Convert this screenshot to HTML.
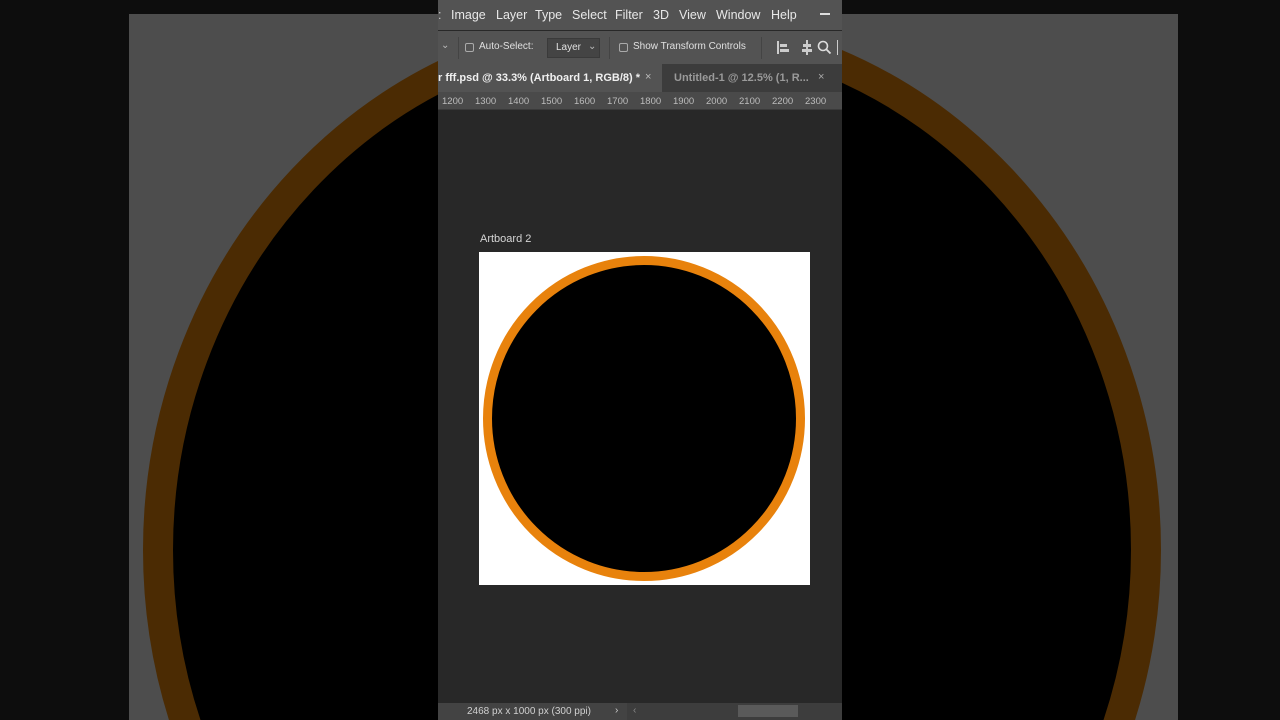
<!DOCTYPE html>
<html><head><meta charset="utf-8"><style>
*{margin:0;padding:0;box-sizing:border-box}
body{width:1280px;height:720px;background:#0d0d0d;position:relative;overflow:hidden;font-family:"Liberation Sans",sans-serif}
.abs{position:absolute}
.panel{left:438px;top:0;width:404px;height:720px;background:#282828;overflow:hidden}
.menu{left:0;top:0;width:404px;height:30px;background:#535353;color:#e8e8e8;font-size:12.5px}
.menu span{position:absolute;top:8px}
.opt{left:0;top:31px;width:404px;height:33px;background:#535353;color:#e0e0e0;font-size:10px}
.tabs{left:0;top:64px;width:404px;height:28px;background:#3c3c3c;font-size:11px;font-weight:bold}
.ruler{left:0;top:92px;width:404px;height:18px;background:#4a4a4a;color:#bdbdbd;font-size:9.5px;border-bottom:1px solid #3a3a3a}
.ruler span{position:absolute;top:4px}
.status{left:0;top:703px;width:404px;height:17px;background:#434343;color:#d0d0d0;font-size:10px}
.cb{position:absolute;width:9px;height:9px;border:1px solid #aaa;border-radius:2px;top:12px}
</style></head><body>
<div class="abs" style="left:129px;top:14px;width:1049px;height:706px;background:#4d4d4d"></div>
<svg class="abs" style="left:0;top:0" width="1280" height="720"><ellipse cx="652" cy="550" rx="494" ry="524" fill="#000" stroke="#4b2b03" stroke-width="30"/></svg>
<div class="abs panel">
 <div class="abs menu">
  <span style="left:0;color:#ccc">:</span>
  <span style="left:13px">Image</span><span style="left:58px">Layer</span><span style="left:97px">Type</span><span style="left:134px">Select</span><span style="left:177px">Filter</span><span style="left:215px">3D</span><span style="left:241px">View</span><span style="left:278px">Window</span><span style="left:333px">Help</span>
  <div class="abs" style="left:382px;top:13px;width:10px;height:2px;background:#ddd"></div>
 </div>
 <div class="abs opt">
  <span class="abs" style="left:3px;top:9px;color:#bbb">⌄</span>
  <div class="abs" style="left:20px;top:6px;width:1px;height:22px;background:#444"></div>
  <div class="cb" style="left:27px"></div><span class="abs" style="left:41px;top:10px">Auto-Select:</span>
  <div class="abs" style="left:109px;top:7px;width:53px;height:20px;background:#444;border:1px solid #3a3a3a"></div>
  <span class="abs" style="left:118px;top:11px">Layer</span><span class="abs" style="left:150px;top:10px;color:#bbb">⌄</span>
  <div class="abs" style="left:171px;top:6px;width:1px;height:22px;background:#444"></div>
  <div class="cb" style="left:181px"></div><span class="abs" style="left:195px;top:10px">Show Transform Controls</span>
  <div class="abs" style="left:323px;top:6px;width:1px;height:22px;background:#444"></div>
  <div class="abs" style="left:339px;top:10px;width:2px;height:13px;background:#ccc"></div>
  <div class="abs" style="left:342px;top:13px;width:7px;height:3px;background:#ccc"></div>
  <div class="abs" style="left:342px;top:18px;width:9px;height:3px;background:#ccc"></div>
  <div class="abs" style="left:368px;top:9px;width:2px;height:15px;background:#ccc"></div>
  <div class="abs" style="left:365px;top:13px;width:8px;height:3px;background:#ccc"></div>
  <div class="abs" style="left:364px;top:18px;width:10px;height:3px;background:#ccc"></div>
  <svg class="abs" style="left:379px;top:9px" width="15" height="15"><circle cx="6" cy="6" r="4.5" fill="none" stroke="#ddd" stroke-width="1.6"/><line x1="9.5" y1="9.5" x2="13.5" y2="13.5" stroke="#ddd" stroke-width="1.8"/></svg>
  <div class="abs" style="left:399px;top:9px;width:1px;height:15px;background:#ccc"></div>
 </div>
 <div class="abs tabs">
  <div class="abs" style="left:0;top:0;width:224px;height:28px;background:#535353"></div>
  <span class="abs" style="left:0;top:8px;color:#f0f0f0">r fff.psd @ 33.3% (Artboard 1, RGB/8) *</span>
  <span class="abs" style="left:207px;top:7px;color:#bbb;font-weight:normal">×</span>
  <span class="abs" style="left:236px;top:8px;color:#9a9a9a">Untitled-1 @ 12.5% (1, R...</span>
  <span class="abs" style="left:380px;top:7px;color:#aaa;font-weight:normal">×</span>
 </div>
 <div class="abs ruler">
  <span style="left:4px">1200</span><span style="left:37px">1300</span><span style="left:70px">1400</span><span style="left:103px">1500</span><span style="left:136px">1600</span><span style="left:169px">1700</span><span style="left:202px">1800</span><span style="left:235px">1900</span><span style="left:268px">2000</span><span style="left:301px">2100</span><span style="left:334px">2200</span><span style="left:367px">2300</span>
 </div>
 <span class="abs" style="left:42px;top:233px;color:#d5d5d5;font-size:11px">Artboard 2</span>
 <div class="abs" style="left:41px;top:252px;width:331px;height:333px;background:#fff"></div>
 <svg class="abs" style="left:0;top:0" width="404" height="720"><ellipse cx="206" cy="418.5" rx="156.5" ry="158" fill="#000" stroke="#e8820c" stroke-width="9"/></svg>
 <div class="abs status">
  <span class="abs" style="left:29px;top:3px">2468 px x 1000 px (300 ppi)</span>
  <span class="abs" style="left:177px;top:2px;color:#ccc">›</span>
  <div class="abs" style="left:189px;top:0;width:215px;height:17px;background:#3d3d3d"></div>
  <span class="abs" style="left:195px;top:2px;color:#888">‹</span>
  <div class="abs" style="left:300px;top:2px;width:60px;height:12px;background:#5a5a5a"></div>
 </div>
</div>
</body></html>
